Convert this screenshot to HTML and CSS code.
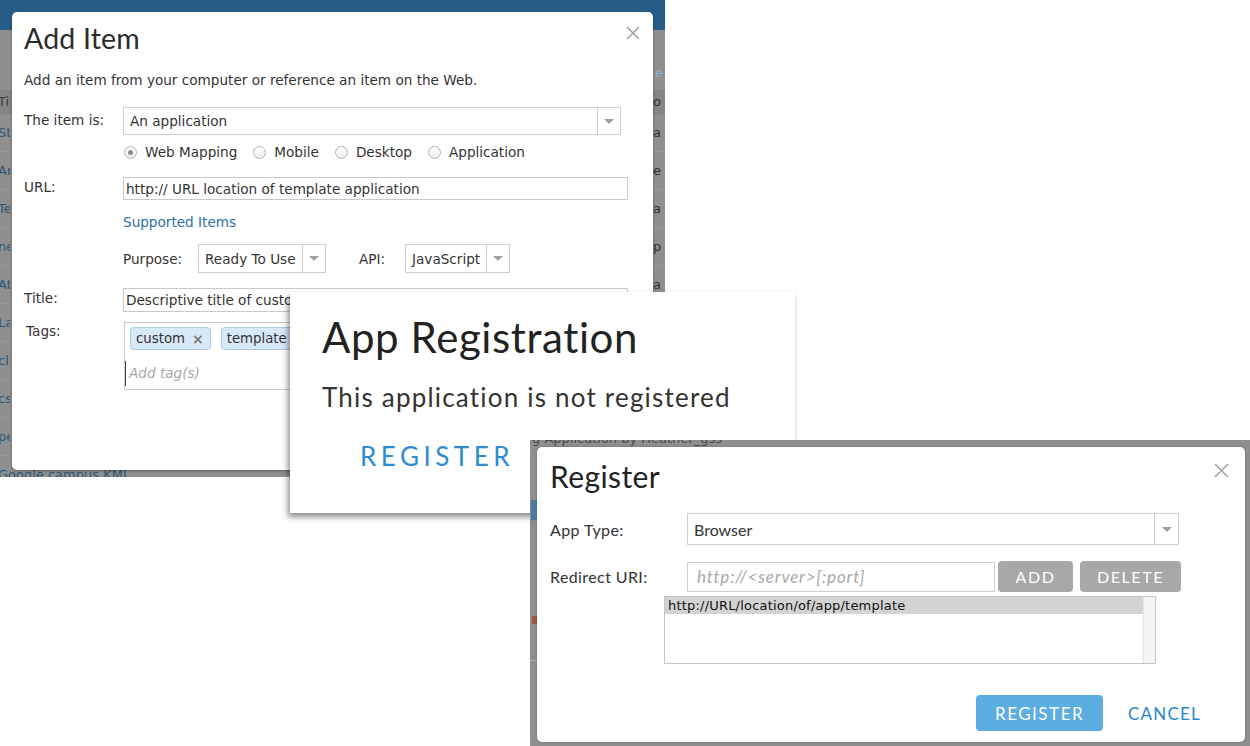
FILE: index.html
```html
<!DOCTYPE html>
<html>
<head>
<meta charset="utf-8">
<link rel="stylesheet" href="styles.css">
</head>
<body>
<main class="canvas">

  <section class="shot shot1">
    <div class="bg1-header"></div>
    <div class="bg1-top"><span class="bg1-right bg1-link">e</span></div>
    <div class="bg1-row bg1-head"><span class="bg1-left">Tit</span><span class="bg1-right">o</span></div>
    <div class="bg1-row"><span class="bg1-left">Sta</span><span class="bg1-right">a</span></div>
    <div class="bg1-row"><span class="bg1-left">Ar</span><span class="bg1-right">e</span></div>
    <div class="bg1-row"><span class="bg1-left">Te</span><span class="bg1-right">a</span></div>
    <div class="bg1-row"><span class="bg1-left">ne</span><span class="bg1-right">p</span></div>
    <div class="bg1-row"><span class="bg1-left">At</span><span class="bg1-right">a</span></div>
    <div class="bg1-row"><span class="bg1-left">La</span><span class="bg1-right"></span></div>
    <div class="bg1-row"><span class="bg1-left">cl</span><span class="bg1-right"></span></div>
    <div class="bg1-row"><span class="bg1-left">cs</span><span class="bg1-right"></span></div>
    <div class="bg1-row"><span class="bg1-left">pe</span><span class="bg1-right"></span></div>
    <div class="bg1-row"><span class="bg1-left bg1-full">Google campus KML</span><span class="bg1-right"></span></div>

    <div class="dlg dlg-add">
      <svg class="close close-add" width="14" height="14" viewBox="0 0 14 14"><path d="M1 1L13 13M13 1L1 13" stroke="#a3a3a3" stroke-width="1.6" fill="none"/></svg>
      <h1 class="add-title">Add Item</h1>
      <p class="add-desc">Add an item from your computer or reference an item on the Web.</p>

      <div class="frow frow-type">
        <label class="flabel">The item is:</label>
        <div class="sel sel-type"><span class="sel-text">An application</span><span class="sel-arrow"><i class="tri"></i></span></div>
      </div>

      <div class="radios">
        <span class="radio on"></span><span class="rlabel">Web Mapping</span>
        <span class="radio"></span><span class="rlabel">Mobile</span>
        <span class="radio"></span><span class="rlabel">Desktop</span>
        <span class="radio"></span><span class="rlabel">Application</span>
      </div>

      <div class="frow frow-url">
        <label class="flabel">URL:</label>
        <div class="inp inp-url">http:// URL location of template application</div>
      </div>

      <a class="supported">Supported Items</a>

      <div class="purpose">
        <span class="plabel">Purpose:</span>
        <div class="sel sel-purpose"><span class="sel-text">Ready To Use</span><span class="sel-arrow"><i class="tri"></i></span></div>
        <span class="plabel api">API:</span>
        <div class="sel sel-api"><span class="sel-text">JavaScript</span><span class="sel-arrow"><i class="tri"></i></span></div>
      </div>

      <div class="frow frow-title">
        <label class="flabel">Title:</label>
        <div class="inp inp-title">Descriptive title of custom template application</div>
      </div>

      <div class="frow frow-tags">
        <label class="flabel tags-label">Tags:</label>
        <div class="tagbox">
          <div class="chips">
            <span class="chip">custom <b class="chip-x">×</b></span>
            <span class="chip">template <b class="chip-x">×</b></span>
          </div>
          <div class="tag-input"><i class="caret"></i><span>Add tag(s)</span></div>
        </div>
      </div>
    </div>
  </section>

  <section class="shot shot2">
    <h2 class="ar-title">App Registration</h2>
    <p class="ar-sub">This application is not registered</p>
    <a class="ar-register">REGISTER</a>
  </section>

  <section class="shot shot3">
    <div class="bg3-text">g Application by Heather_gss</div>
    <i class="bg3-tab"></i>
    <i class="bg3-x"></i>
    <i class="bg3-line"></i>
    <div class="dlg dlg-reg">
      <svg class="close close-reg" width="15" height="15" viewBox="0 0 15 15"><path d="M1 1L14 14M14 1L1 14" stroke="#a3a3a3" stroke-width="1.6" fill="none"/></svg>
      <h2 class="reg-title">Register</h2>
      <div class="rrow rrow-type">
        <label class="rlabel2">App Type:</label>
        <div class="sel sel-app"><span class="sel-text">Browser</span><span class="sel-arrow"><i class="tri"></i></span></div>
      </div>
      <div class="rrow rrow-uri">
        <label class="rlabel2">Redirect URI:</label>
        <div class="inp inp-uri">http://&lt;server&gt;[:port]</div>
        <button class="gbtn btn-add">ADD</button>
        <button class="gbtn btn-del">DELETE</button>
      </div>
      <div class="listbox">
        <div class="list-items">
          <div class="list-item sel-item">http://URL/location/of/app/template</div>
        </div>
        <div class="list-scroll"></div>
      </div>
      <div class="reg-actions">
        <button class="btn-primary">REGISTER</button>
        <a class="btn-cancel">CANCEL</a>
      </div>
    </div>
  </section>

</main>
</body>
</html>
```

FILE: styles.css
```css
* { box-sizing: border-box; margin: 0; padding: 0; }
html, body { width: 1250px; height: 746px; overflow: hidden; background: #fff; }
body { font-family: "DejaVu Sans", Verdana, sans-serif; color: #333; }
.canvas { position: relative; width: 1250px; height: 746px; }
.shot { position: absolute; overflow: hidden; }

/* ---------- Shot 1: Add Item ---------- */
.shot1 { left: 0; top: 0; width: 665px; height: 477px; background: #8f8f8f; }
.bg1-header { height: 30px; background: #275c87; }
.bg1-top { height: 60px; display: flex; justify-content: flex-end; align-items: flex-end; padding-bottom: 10px; }
.bg1-row { height: 38px; display: flex; align-items: center; border-bottom: 1px solid #999; font-size: 13px; }
.bg1-head { height: 24px; background: #858585; border-bottom: 1px solid #808080; }
.bg1-left { width: 12px; margin-left: -2px; white-space: nowrap; overflow: hidden; color: #2d5677; }
.bg1-left.bg1-full { width: 200px; }
.bg1-head .bg1-left { color: #3c3c3c; }
.bg1-right { width: 12px; margin-left: auto; color: #2f2f2f; }
.bg1-link { color: #8fb0cc; width: 10px; font-size: 13px; }

.dlg { position: absolute; background: #fff; border-radius: 5px; }
.dlg-add { left: 12px; top: 12px; width: 641px; height: 458px; padding: 0 12px; box-shadow: 0 1px 3px rgba(0,0,0,.35); font-size: 13.6px; }
.close { position: absolute; display: block; }
.close-add { right: 13px; top: 14px; }

.add-title { font-family: Lato, "Open Sans", sans-serif; font-weight: 400; font-size: 28.5px; line-height: 32px; padding-top: 10px; color: #2b2b2b; letter-spacing: 0.2px; }
.add-desc { line-height: 16px; margin-top: 18px; color: #333; }

.frow { display: flex; align-items: flex-start; }
.flabel { width: 99px; flex: none; line-height: 16px; color: #333; }
.frow-type { margin-top: 19px; }
.frow-type .flabel { padding-top: 5px; }

.sel { display: flex; border: 1px solid #cfcfcf; background: #fff; }
.sel-text { flex: 1; padding-left: 6px; white-space: nowrap; display: flex; align-items: center; }
.sel-arrow { width: 23px; flex: none; border-left: 1px solid #cfcfcf; display: flex; align-items: center; justify-content: center; }
.tri { display: block; width: 0; height: 0; border-left: 5px solid transparent; border-right: 5px solid transparent; border-top: 5px solid #a0a0a0; }
.sel-type { width: 498px; height: 28px; }

.radios { display: flex; align-items: center; height: 18px; margin-top: 8px; padding-left: 100px; }
.radio { width: 13px; height: 13px; border-radius: 50%; border: 1px solid #b4b4b4; background: linear-gradient(#fff, #ececec); display: flex; align-items: center; justify-content: center; flex: none; }
.radio.on::after { content: ""; width: 5px; height: 5px; border-radius: 50%; background: #8c8c8c; }
.rlabel { margin-left: 8px; margin-right: 16px; }

.inp { border: 1px solid #c9c9c9; white-space: nowrap; overflow: hidden; display: flex; align-items: center; padding-left: 2px; }
.frow-url { margin-top: 16px; }
.frow-url .flabel { padding-top: 2px; }
.inp-url { width: 505px; height: 23px; }

.supported { display: block; margin-top: 14px; margin-left: 99px; line-height: 16px; color: #2a6fa3; }

.purpose { display: flex; align-items: center; margin-top: 14px; margin-left: 99px; height: 29px; }
.plabel { width: 75px; }
.plabel.api { width: 46px; margin-left: 33px; }
.sel-purpose { width: 128px; height: 29px; }
.sel-api { width: 105px; height: 29px; }

.frow-title { margin-top: 15px; }
.frow-title .flabel { padding-top: 2px; }
.inp-title { width: 505px; height: 24px; }

.frow-tags { margin-top: 10px; }
.tags-label { padding-left: 2px; padding-top: 1px; }
.tagbox { width: 504px; height: 68px; margin-left: 1px; border: 1px solid #c9c9c9; padding: 4px 5px 0; }
.chips { display: flex; gap: 10px; }
.chip { display: flex; align-items: center; height: 23px; padding: 0 6px 0 5px; background: #d7e8f8; border: 1px solid #a8cbe8; border-radius: 4px; font-size: 13.3px; color: #333; white-space: nowrap; }
.chip-x { margin-left: 7px; color: #7a7a7a; font-size: 14px; font-weight: bold; }
.tag-input { display: flex; align-items: center; height: 26px; margin-top: 10px; margin-left: -5px; }
.caret { display: block; width: 1px; height: 25px; background: #444; }
.tag-input span { margin-left: 3px; font-style: italic; color: #a8a8a8; }

/* ---------- Shot 2: App Registration ---------- */
.shot2 { left: 290px; top: 292px; width: 505px; height: 221px; background: #fff; overflow: visible; padding-left: 32px; box-shadow: -2px 4px 6px rgba(0,0,0,.45); font-family: Lato, "Open Sans", sans-serif; }
.ar-title { font-weight: 400; font-size: 42px; line-height: 46px; padding-top: 22px; color: #222; letter-spacing: 0.6px; }
.ar-sub { font-size: 26px; line-height: 30px; margin-top: 22px; color: #333; letter-spacing: 1.2px; }
.ar-register { display: block; margin-top: 29px; margin-left: 38px; font-size: 26px; line-height: 30px; letter-spacing: 4.5px; color: #2d8bd2; }

/* ---------- Shot 3: Register ---------- */
.shot3 { left: 530px; top: 440px; width: 720px; height: 306px; background: #8e8e8e; font-family: Lato, "Open Sans", sans-serif; }
.bg3-text { position: absolute; left: 2px; top: -9px; font-family: "DejaVu Sans", sans-serif; font-size: 13px; color: #4a4a4a; white-space: nowrap; }
.bg3-tab { position: absolute; left: 1px; top: 60px; width: 6px; height: 20px; background: #4f7aa0; }
.bg3-x { position: absolute; left: 2px; top: 176px; width: 5px; height: 8px; background: #9a5a45; }
.bg3-line { position: absolute; left: 0; top: 220px; width: 7px; height: 1px; background: #b0b0b0; }

.dlg-reg { left: 7px; top: 7px; width: 708px; height: 295px; padding-left: 13px; box-shadow: 0 0 2px rgba(0,0,0,.3); }
.close-reg { left: 677px; top: 16px; }
.reg-title { font-weight: 400; font-size: 30px; line-height: 32px; padding-top: 13px; color: #222; letter-spacing: 0.4px; }

.rrow { display: flex; align-items: center; }
.rlabel2 { width: 137px; flex: none; font-size: 16px; color: #333; letter-spacing: 0.4px; }
.rrow-type { margin-top: 21px; }
.sel-app { width: 492px; height: 32px; }
.sel-app .sel-text { font-family: Lato, sans-serif; font-size: 16px; padding-left: 6px; color: #333; }
.sel-app .sel-arrow { width: 24px; }

.rrow-uri { margin-top: 16px; height: 31px; }
.inp-uri { width: 308px; height: 30px; padding-left: 9px; font-family: Lato, sans-serif; font-size: 17px; letter-spacing: 0.8px; font-style: italic; color: #a9a9a9; border-color: #cfcfcf; }
.gbtn { height: 31px; border: none; border-radius: 4px; background: #a8a8a8; color: #fff; font-family: Lato, sans-serif; font-size: 16px; letter-spacing: 1.6px; }
.btn-add { width: 75px; margin-left: 3px; }
.btn-del { width: 101px; margin-left: 7px; }

.listbox { display: flex; width: 492px; height: 68px; margin-top: 4px; margin-left: 114px; border: 1px solid #c6c6c6; }
.list-items { flex: 1; }
.list-item { height: 17px; padding-left: 3px; font-family: "DejaVu Sans", sans-serif; font-size: 13px; letter-spacing: 0.2px; line-height: 17px; color: #111; white-space: nowrap; }
.sel-item { background: #d3d3d3; }
.list-scroll { width: 12px; background: #f5f5f5; border-left: 1px solid #e4e4e4; }

.reg-actions { display: flex; align-items: center; justify-content: flex-end; margin-top: 31px; padding-right: 44px; }
.btn-primary { width: 127px; height: 36px; border: none; border-radius: 4px; background: #5badE2; color: #fff; font-family: Lato, sans-serif; font-size: 17px; letter-spacing: 1.5px; }
.btn-cancel { margin-left: 25px; font-size: 17px; letter-spacing: 1.2px; color: #2a86ce; }
```
